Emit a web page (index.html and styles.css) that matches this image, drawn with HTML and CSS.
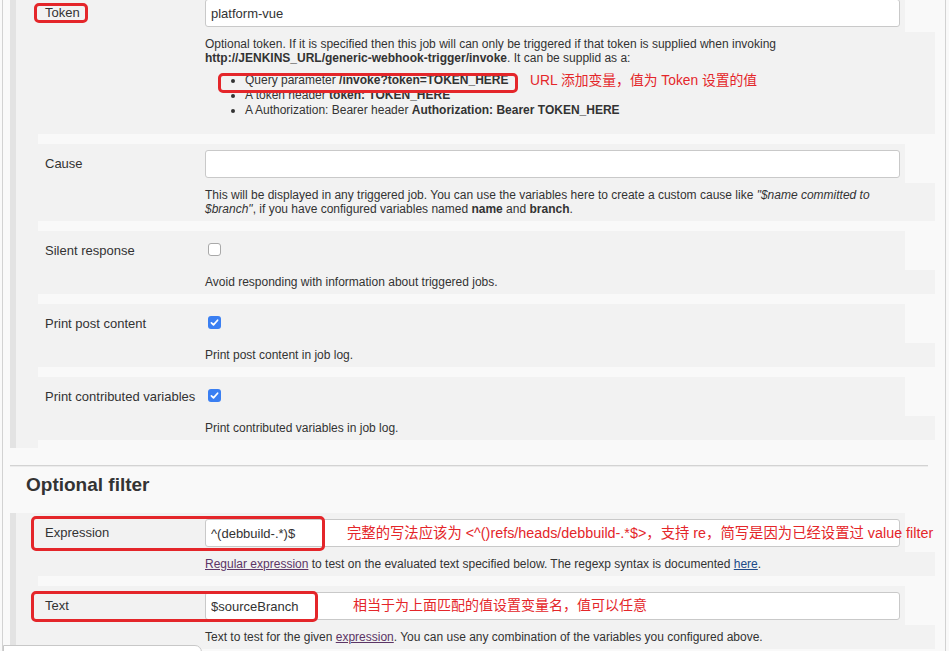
FILE: index.html
```html
<!DOCTYPE html>
<html lang="en">
<head>
<meta charset="utf-8">
<title>Generic Webhook Trigger</title>
<link rel="stylesheet" href="styles.css">
</head>
<body>
<div class="page">
  <div class="section">
    <div class="rows">
      <div class="row">
        <div class="ctl">
          <div class="lbl"><span class="mark">Token</span></div>
          <div class="fld"><input class="inp" type="text" value="platform-vue"></div>
        </div>
        <div class="help">
          <p>Optional token. If it is specified then this job will can only be triggered if that token is supplied when invoking <b>http://JENKINS_URL/generic-webhook-trigger/invoke</b>. It can be supplid as a:</p>
          <ul class="opts">
            <li>Query parameter <b>/invoke?token=TOKEN_HERE</b></li>
            <li>A token header <b>token: TOKEN_HERE</b></li>
            <li>A Authorization: Bearer header <b>Authorization: Bearer TOKEN_HERE</b></li>
            <span class="hl hl-query"></span>
            <span class="note note-query">URL 添加变量，值为 Token 设置的值</span>
          </ul>
        </div>
      </div>
      <div class="row">
        <div class="ctl">
          <div class="lbl">Cause</div>
          <div class="fld"><input class="inp" type="text" value=""></div>
        </div>
        <div class="help">
          <p>This will be displayed in any triggered job. You can use the variables here to create a custom cause like <i>"$name committed to $branch"</i>, if you have configured variables named <b>name</b> and <b>branch</b>.</p>
        </div>
      </div>
      <div class="row">
        <div class="ctl">
          <div class="lbl">Silent response</div>
          <div class="fld"><span class="cb"></span></div>
        </div>
        <div class="help"><p>Avoid responding with information about triggered jobs.</p></div>
      </div>
      <div class="row">
        <div class="ctl">
          <div class="lbl">Print post content</div>
          <div class="fld"><span class="cb on"><svg viewBox="0 0 13 13" width="13" height="13"><path d="M3.4 6.8 L5.5 8.9 L9.6 4.2" fill="none" stroke="#fff" stroke-width="1.7" stroke-linecap="round" stroke-linejoin="round"/></svg></span></div>
        </div>
        <div class="help"><p>Print post content in job log.</p></div>
      </div>
      <div class="row">
        <div class="ctl">
          <div class="lbl">Print contributed variables</div>
          <div class="fld"><span class="cb on"><svg viewBox="0 0 13 13" width="13" height="13"><path d="M3.4 6.8 L5.5 8.9 L9.6 4.2" fill="none" stroke="#fff" stroke-width="1.7" stroke-linecap="round" stroke-linejoin="round"/></svg></span></div>
        </div>
        <div class="help"><p>Print contributed variables in job log.</p></div>
      </div>
    </div>
  </div>

  <div class="divider"></div>
  <h2 class="heading">Optional filter</h2>

  <div class="section">
    <div class="rows">
      <div class="row">
        <div class="ctl">
          <div class="lbl">Expression</div>
          <div class="fld"><input class="inp" type="text" value="^(debbuild-.*)$"></div>
          <span class="hl hl-expr"></span>
          <span class="note note-expr">完整的写法应该为 &lt;^()refs/heads/debbuild-.*$&gt;，支持 re，简写是因为已经设置过 value filter</span>
        </div>
        <div class="help"><p><a class="visited" href="#">Regular expression</a> to test on the evaluated text specified below. The regexp syntax is documented <a class="link" href="#">here</a>.</p></div>
      </div>
      <div class="row">
        <div class="ctl">
          <div class="lbl">Text</div>
          <div class="fld"><input class="inp" type="text" value="$sourceBranch"></div>
          <span class="hl hl-text"></span>
          <span class="note note-text">相当于为上面匹配的值设置变量名，值可以任意</span>
        </div>
        <div class="help"><p>Text to test for the given <a class="visited" href="#">expression</a>. You can use any combination of the variables you configured above.</p></div>
      </div>
    </div>
  </div>
  <div class="popup"></div>
</div>
</body>
</html>
```
FILE: styles.css
```css
* { box-sizing: border-box; }
html, body { margin: 0; padding: 0; height: 100%; overflow: hidden; }
body {
  background: #f9f9f9;
  font-family: "Liberation Sans", Arial, sans-serif;
  font-size: 13px;
  color: #333;
}
.page {
  margin-left: 2px;
  margin-top: -7px;
  width: 944px;
  height: calc(100vh + 7px);
  border-left: 1px solid #d2d2d2;
  border-right: 1px solid #d2d2d2;
}
.section {
  margin: 0 10px 0 7px;
  border-left: 6px solid #e3e3e3;
  background: #f2f2f2;
  padding-left: 22px;
}
.rows {
  background: #f9f9f9;
  display: flex;
  flex-direction: column;
  gap: 10px;
  padding-bottom: 8px;
}
.ctl {
  position: relative;
  display: flex;
  background: #f2f2f2;
  margin-right: 30px;
  padding: 6px 5px 5px 0;
}
.lbl {
  flex: none;
  width: 167px;
  padding-left: 7px;
  line-height: 28px;
  white-space: nowrap;
}
.fld { flex: 1; }
.inp {
  display: block;
  width: 100%;
  height: 28px;
  margin: 0;
  border: 1px solid #c9c9c9;
  border-radius: 3px;
  background: #fff;
  padding: 0 5px;
  font-family: "Liberation Sans", Arial, sans-serif;
  font-size: 13px;
  color: #333;
  outline: none;
}
.help {
  background: #f2f2f2;
  padding: 5px 30px 5px 167px;
  font-size: 12px;
  line-height: 14px;
}
.help p { margin: 0; }
.help b { color: #333; }
.opts {
  position: relative;
  margin: 8px 0 11px;
  padding-left: 40px;
  list-style: disc;
}
.opts li { line-height: 15px; }
.cb {
  display: block;
  width: 13px;
  height: 13px;
  margin: 6px 0 0 3px;
  border: 1px solid #a9a9a9;
  border-radius: 3px;
  background: #fff;
}
.cb.on {
  border: none;
  background: #3a7ff2;
}
.cb svg { display: block; }
a.visited { color: #5c3566; text-decoration: underline; }
a.link { color: #204a87; text-decoration: underline; }

.mark {
  display: inline-block;
  margin-left: -11px;
  padding: 0 5px 0 8px;
  line-height: 14px;
  border: 3px solid #e4262a;
  border-radius: 5px;
}
.hl {
  position: absolute;
  border: 3px solid #e4262a;
  border-radius: 5px;
  pointer-events: none;
}
.note {
  position: absolute;
  color: #e4262a;
  font-family: "Liberation Sans", "Noto Sans CJK SC", sans-serif;
  font-size: 14px;
  line-height: 20px;
  white-space: nowrap;
}
.hl-query { left: 13px; top: 0; width: 300px; height: 20px; }
.note-query { left: 325px; top: -2px; font-size: 13.8px; }
.hl-expr { left: -7px; top: 3px; width: 294px; height: 35px; }
.note-expr { left: 309px; top: 10px; font-size: 14.35px; }
.hl-text { left: -7px; top: 5px; width: 287px; height: 31px; }
.note-text { left: 315px; top: 9px; }

.divider {
  margin: 17px 17px 0 7px;
  border-top: 1px solid #d3d3d3;
  border-bottom: 1px solid #ececec;
}
.heading {
  margin: 7px 0 17px 23px;
  font-size: 19px;
  line-height: 22px;
  font-weight: bold;
  color: #333;
}
.popup {
  position: fixed;
  left: 3px;
  top: 645px;
  width: 199px;
  height: 30px;
  background: #fff;
  border: 1px solid #c8c8c8;
  border-radius: 0 7px 0 0;
}
```
